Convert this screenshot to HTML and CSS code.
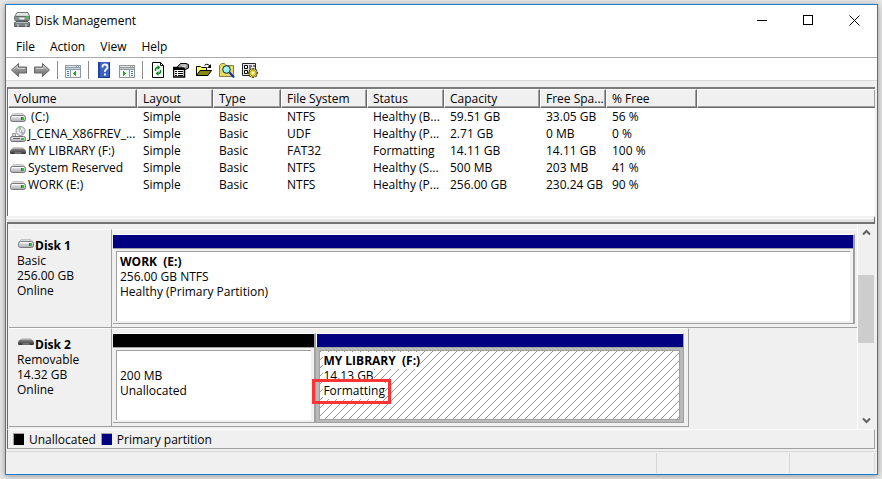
FILE: index.html
```html
<!DOCTYPE html>
<html lang="en">
<head>
    <meta charset="UTF-8">
    <meta name="viewport" content="width=device-width, initial-scale=1.0">
    <title>Disk Management</title>
    <link rel="stylesheet" href="styles.css">
</head>
<body>

    <!-- Shared drive icons -->
    <svg class="icon-defs" aria-hidden="true">
        <linearGradient id="metal" x1="0" y1="0" x2="0" y2="1">
            <stop offset="0" stop-color="#f4f4f6"/>
            <stop offset="1" stop-color="#a9a9b0"/>
        </linearGradient>
        <linearGradient id="rubber" x1="0" y1="0" x2="0" y2="1">
            <stop offset="0" stop-color="#8a8a8a"/>
            <stop offset="1" stop-color="#2e2e2e"/>
        </linearGradient>
        <linearGradient id="arrow" x1="0" y1="0" x2="0" y2="1">
            <stop offset="0" stop-color="#b8b8b8"/>
            <stop offset="1" stop-color="#6c6c6c"/>
        </linearGradient>
        <symbol id="drive" viewBox="0 0 16 16">
            <path d="M1 7.500 L3 4.500 H13 L15 7.500Z" fill="#dcdcdf" stroke="#c5c5c8"/>
            <rect x="0.500" y="6.500" width="15" height="6" rx="2" fill="url(#metal)" stroke="#77777c"/>
            <path d="M2 7.500h12" stroke="#fff"/>
            <rect x="12" y="8" width="2" height="3" fill="#2fc22f"/>
            <path d="M11.500 8v3" stroke="#1c7a1c"/>
        </symbol>
        <symbol id="removable" viewBox="0 0 16 16">
            <path d="M2 6 L4 4.500 H12 L14 6Z" fill="#dcdcdc" stroke="#cacaca"/>
            <path d="M0 9 Q0 6 3 5.500 H13 Q16 6 16 9 V10 Q16 11 14.500 11 H1.500 Q0 11 0 10Z" fill="url(#rubber)"/>
            <path d="M4 10.500 L5 9.500 H11 L12 10.500Z" fill="#a0a0a0"/>
        </symbol>
        <symbol id="disc" viewBox="0 0 16 16">
            <circle cx="10.500" cy="5" r="4.500" fill="#e6e9ea" stroke="#8f9396"/>
            <path d="M10.500 5 L8 1.500 A4 4 0 0 1 11 1Z" fill="#8cc49a"/>
            <path d="M10.500 5 L14 6.500 A4 4 0 0 1 12 9Z" fill="#9aa8d8"/>
            <circle cx="10.500" cy="5" r="1.200" fill="#fff" stroke="#999" stroke-width="0.600"/>
            <path d="M2.500 7.500h3v3h-3z" fill="#ddd" stroke="#999"/>
            <rect x="0.500" y="10.500" width="15" height="5" rx="2" fill="url(#metal)" stroke="#6d6d72"/>
            <path d="M3 12.500h7" stroke="#66666a"/>
            <rect x="11" y="12" width="3" height="2" fill="#2fc22f"/>
        </symbol>
    </svg>

    <div class="window">
        <header class="title-bar">
            <svg class="icon app-icon" viewBox="0 0 16 16" aria-hidden="true">
                <path d="M1 4 L3 0.500 H14 L15.500 4 V7 H1Z" fill="#d5d7d7" stroke="#747979"/>
                <path d="M3 2h10" stroke="#f4f4f4"/>
                <rect x="0.500" y="4.500" width="15" height="4" rx="1" fill="#8b9292" stroke="#646a6a"/>
                <path d="M5 5.500h6l-1 2H6z" fill="#eee"/>
                <rect x="12" y="4" width="2" height="2" fill="#35d335"/>
                <path d="M0.500 14.500 V11 L2 9.500 H14 L15.500 11 V14.500Z" fill="#7a8388" stroke="#535b60"/>
                <path d="M2 10.500h12" stroke="#b7bdc0"/>
                <path d="M4 12v3M12 12v3" stroke="#d8dcde"/>
            </svg>
            <h1 class="title">Disk Management</h1>
            <div class="window-buttons">
                <button type="button" aria-label="Minimize"><svg width="11" height="11" viewBox="0 0 11 11"><path d="M0 5.500h10"/></svg></button>
                <button type="button" aria-label="Maximize"><svg width="11" height="11" viewBox="0 0 11 11"><path d="M0.500 0.500h9v9h-9z"/></svg></button>
                <button type="button" aria-label="Close"><svg class="smooth" width="11" height="11" viewBox="0 0 11 11"><path d="M0.500 0.500l10 10M10.500 0.500l-10 10"/></svg></button>
            </div>
        </header>

        <nav class="menu-bar">
            <button type="button">File</button>
            <button type="button">Action</button>
            <button type="button">View</button>
            <button type="button">Help</button>
        </nav>

        <div class="toolbar" role="toolbar" aria-label="Tools">
            <button type="button" aria-label="Back">
                <svg class="icon" viewBox="0 0 16 16"><path d="M0.500 8 L7.500 1.500 V5 H15.500 V11 H7.500 V14.500Z" fill="url(#arrow)" stroke="#666"/><path d="M2.500 7.500 L6.500 4 V6.500 H14" fill="none" stroke="#ccc"/></svg>
            </button>
            <button type="button" aria-label="Forward">
                <svg class="icon" viewBox="0 0 16 16"><path d="M15.500 8 L8.500 1.500 V5 H0.500 V11 H8.500 V14.500Z" fill="url(#arrow)" stroke="#666"/><path d="M2 6.500 H9.500 V4 L13 7.500" fill="none" stroke="#ccc"/></svg>
            </button>
            <span class="separator"></span>
            <button type="button" aria-label="Show or hide console tree">
                <svg class="icon crisp" viewBox="0 0 16 16">
                    <path d="M0 3h16v13H0z" fill="#8e9aa5"/><path d="M1 4h10v1H1z" fill="#dfe7ee"/><path d="M12 4h1v1h-1zM14 4h1v1h-1z" fill="#fff"/>
                    <path d="M1 6h14v1H1z" fill="#c8d4df"/><path d="M1 8h4v7H1zM6 8h9v7H6z" fill="#f4f6f8"/>
                    <path d="M2 9h2v1H2zM2 11h2v1H2zM2 13h2v1H2z" fill="#3d78b8"/><path d="M11 9v5L8 11.500z" fill="#22a922"/>
                </svg>
            </button>
            <span class="separator"></span>
            <button type="button" aria-label="Help">
                <svg class="icon" viewBox="0 0 16 16">
                    <rect x="2" y="0" width="12" height="16" fill="#3c63c4"/><path d="M2 0h2v16H2z" fill="#25439a"/><path d="M13 0h1v16h-1zM4 15h10v1H4z" fill="#1f3782"/>
                    <path d="M6.500 5.500 V4.500 Q6.500 2.500 9 2.500 T11.500 5 Q11.500 6.500 10 7.500 T9 10" fill="none" stroke="#fff" stroke-width="1.800"/><rect x="8" y="11.500" width="2" height="2" fill="#fff"/>
                </svg>
            </button>
            <button type="button" aria-label="Show or hide action pane">
                <svg class="icon crisp" viewBox="0 0 16 16">
                    <path d="M0 3h16v13H0z" fill="#8e9696"/><path d="M1 4h10v1H1z" fill="#e5e9e9"/><path d="M12 4h1v1h-1zM14 4h1v1h-1z" fill="#fff"/>
                    <path d="M1 6h14v1H1z" fill="#c8d0d4"/><path d="M1 8h9v7H1zM11 8h4v7h-4z" fill="#f4f6f8"/>
                    <path d="M12 9h2v1h-2zM12 11h2v1h-2zM12 13h2v1h-2z" fill="#3d78b8"/><path d="M4 9v5l3-2.500z" fill="#22a922"/>
                </svg>
            </button>
            <span class="separator"></span>
            <button type="button" aria-label="Refresh">
                <svg class="icon" viewBox="0 0 16 16">
                    <path d="M2.500 0.500h8l3 3v12h-11z" fill="#fff" stroke="#000"/><path d="M10.500 0.500v3h3" fill="none" stroke="#000"/>
                    <path d="M5.500 9 V7.500 Q5.500 5.500 8 5.500" fill="none" stroke="#078a22" stroke-width="1.500"/><path d="M7.500 3v5l3-2.500z" fill="#078a22"/>
                    <path d="M10.500 8 V9.500 Q10.500 11.500 8 11.500" fill="none" stroke="#078a22" stroke-width="1.500"/><path d="M8.500 9v5l-3-2.500z" fill="#078a22"/>
                </svg>
            </button>
            <button type="button" aria-label="Properties">
                <svg class="icon" viewBox="0 0 16 16">
                    <path d="M0.500 5.500h11v9.500h-11z" fill="#fff" stroke="#000" stroke-width="1.500"/><path d="M1 6h10v2H1z" fill="#000"/>
                    <path d="M2 9.500h2M5 9.500h5M2 11.500h2M5 11.500h5M2 13.500h2M5 13.500h5" stroke="#000"/>
                    <path d="M4.500 4.500 L7.500 1.500 H13 L15.500 2.500 V6 L12.500 7.500 L10 5.500 L6.500 6Z" fill="#999" stroke="#000"/><path d="M8 3h5M9 5l4-1" stroke="#ddd"/>
                </svg>
            </button>
            <button type="button" aria-label="Open">
                <svg class="icon" viewBox="0 0 16 16">
                    <path d="M0.500 13.500 V4.500 H4.500 L5.500 5.500 H10.500 V8" fill="#ffff7a" stroke="#000"/><path d="M0.500 13.500 L4 8.500 H15.500 L12 13.500Z" fill="#868a12" stroke="#000"/>
                    <path d="M8.500 3.500 Q10 1.500 12 2.500 L14 4" fill="none" stroke="#000"/><path d="M15 2v4h-4z" fill="#000"/>
                </svg>
            </button>
            <button type="button" aria-label="Find">
                <svg class="icon" viewBox="0 0 16 16">
                    <path d="M0.500 14.500 V3.500 L2.500 1.500 H5.500 L7 3.500 H14.500 V14.500Z" fill="#ead95d" stroke="#84804a"/><path d="M2 5.500h11" stroke="#fffad0" stroke-dasharray="1 1"/>
                    <circle cx="7.500" cy="7.500" r="3.800" fill="#8df2fb" stroke="#223"/><path d="M6 7.500l2-2" stroke="#fff"/><path d="M10.500 10.500l4.500 5" stroke="#1028c8" stroke-width="2"/>
                </svg>
            </button>
            <button type="button" aria-label="Settings">
                <svg class="icon" viewBox="0 0 16 16">
                    <path d="M0.500 1.500h13v12h-13z" fill="#e8e8e8" stroke="#222"/><path d="M2.500 3.500h3v3h-3zM2.500 8.500h3v3h-3z" fill="#fff" stroke="#000"/><path d="M7 4h3M7 6h2M7 9h2M11 4h2" stroke="#000"/>
                    <path d="M11 6v10M6 11h10M7.500 7.500l7 7M14.500 7.500l-7 7" stroke="#332d00" stroke-width="2.400"/><path d="M11 6.500v9M6.500 11h9M8 8l6 6M14 8l-6 6" stroke="#efd63c" stroke-width="1.200"/>
                    <circle cx="11" cy="11" r="2.800" fill="#efd63c"/><circle cx="11" cy="11" r="1.200" fill="#fff"/>
                </svg>
            </button>
        </div>

        <main class="content">
            <div class="volume-list">
                <table>
                    <colgroup>
                        <col class="col-volume">
                        <col class="col-layout">
                        <col class="col-type">
                        <col class="col-fs">
                        <col class="col-status">
                        <col class="col-capacity">
                        <col class="col-free">
                        <col class="col-percent">
                        <col>
                    </colgroup>
                    <thead>
                        <tr><th>Volume</th><th>Layout</th><th>Type</th><th>File System</th><th>Status</th><th>Capacity</th><th>Free Spa...</th><th>% Free</th><th class="filler"></th></tr>
                    </thead>
                    <tbody>
                        <tr><td class="name"><svg class="icon"><use href="#drive"/></svg>&nbsp;(C:)</td><td>Simple</td><td>Basic</td><td>NTFS</td><td>Healthy (B...</td><td>59.51 GB</td><td>33.05 GB</td><td>56 %</td><td></td></tr>
                        <tr><td class="name"><svg class="icon"><use href="#disc"/></svg>J_CENA_X86FREV_...</td><td>Simple</td><td>Basic</td><td>UDF</td><td>Healthy (P...</td><td>2.71 GB</td><td>0 MB</td><td>0 %</td><td></td></tr>
                        <tr><td class="name"><svg class="icon"><use href="#removable"/></svg>MY LIBRARY (F:)</td><td>Simple</td><td>Basic</td><td>FAT32</td><td>Formatting</td><td>14.11 GB</td><td>14.11 GB</td><td>100 %</td><td></td></tr>
                        <tr><td class="name"><svg class="icon"><use href="#drive"/></svg>System Reserved</td><td>Simple</td><td>Basic</td><td>NTFS</td><td>Healthy (S...</td><td>500 MB</td><td>203 MB</td><td>41 %</td><td></td></tr>
                        <tr><td class="name"><svg class="icon"><use href="#drive"/></svg>WORK (E:)</td><td>Simple</td><td>Basic</td><td>NTFS</td><td>Healthy (P...</td><td>256.00 GB</td><td>230.24 GB</td><td>90 %</td><td></td></tr>
                    </tbody>
                </table>
            </div>
            <div class="splitter"></div>

            <div class="disk-view">
                <div class="disks">
                    <section class="disk">
                        <div class="disk-label">
                            <h2><svg class="icon"><use href="#drive"/></svg>Disk 1</h2>
                            <p>Basic</p>
                            <p>256.00 GB</p>
                            <p>Online</p>
                        </div>
                        <div class="partitions">
                            <div class="partition primary">
                                <div class="bar"></div>
                                <div class="details">
                                    <p><b>WORK &nbsp;(E:)</b></p>
                                    <p>256.00 GB NTFS</p>
                                    <p>Healthy (Primary Partition)</p>
                                </div>
                            </div>
                        </div>
                    </section>

                    <section class="disk">
                        <div class="disk-label">
                            <h2><svg class="icon"><use href="#removable"/></svg>Disk 2</h2>
                            <p>Removable</p>
                            <p>14.32 GB</p>
                            <p>Online</p>
                        </div>
                        <div class="partitions small">
                            <div class="partition unallocated">
                                <div class="bar"></div>
                                <div class="details">
                                    <p>&nbsp;</p>
                                    <p>200 MB</p>
                                    <p>Unallocated</p>
                                </div>
                            </div>
                            <div class="partition primary selected">
                                <div class="bar"></div>
                                <div class="details">
                                    <p><b>MY LIBRARY &nbsp;(F:)</b></p>
                                    <p><span>14.13 GB</span></p>
                                    <p class="marked"><span>Formatting</span></p>
                                </div>
                            </div>
                        </div>
                    </section>
                </div>

                <div class="scrollbar">
                    <button type="button" aria-label="Scroll up"><svg width="9" height="7" viewBox="0 0 9 7"><path d="M1 5.500L4.500 2L8 5.500"/></svg></button>
                    <div class="track"><div class="thumb"></div></div>
                    <button type="button" aria-label="Scroll down"><svg width="9" height="7" viewBox="0 0 9 7"><path d="M1 1.500L4.500 5L8 1.500"/></svg></button>
                </div>
            </div>

            <div class="legend">
                <span class="swatch black"></span><span>Unallocated</span>
                <span class="swatch navy"></span><span>Primary partition</span>
            </div>
        </main>

        <footer class="status-bar">
            <span></span>
            <span></span>
            <span></span>
        </footer>
    </div>

</body>
</html>
```
FILE: styles.css
```css
*,
*::after {
    box-sizing: border-box;
}

body {
    margin: 0;
    padding: 4px 4px 4px 5px;
    min-height: 100vh;
    display: flex;
    background-color: #e6e6e6;
    color: #000;
    font-family: "Open Sans", "Noto Sans", sans-serif;
    font-size: 12px;
    line-height: 15px;
}

h1, h2, p {
    margin: 0;
    font-size: 12px;
}

button {
    padding: 0;
    border: none;
    background: none;
    color: inherit;
    font: inherit;
}

.icon-defs {
    position: absolute;
    width: 0;
    height: 0;
}

.icon {
    display: block;
    flex: none;
    width: 16px;
    height: 16px;
}

.crisp {
    shape-rendering: crispEdges;
}

.window {
    flex: 1;
    min-width: 0;
    display: flex;
    flex-direction: column;
    border: 1px solid #1a7fd0;
    background-color: #fff;
    box-shadow: 0 1px 6px rgba(0, 0, 0, 0.35);
}

/* Title and menu */
.title-bar {
    display: flex;
    align-items: center;
    height: 30px;
    padding-left: 8px;
}

.title {
    flex: 1;
    margin-left: 5px;
    font-weight: normal;
}

.window-buttons {
    display: flex;
}

.window-buttons button {
    display: flex;
    align-items: center;
    justify-content: center;
    width: 46px;
    height: 28px;
}

.window-buttons path {
    fill: none;
    stroke: #000;
    shape-rendering: crispEdges;
}

.window-buttons .smooth path {
    shape-rendering: auto;
}

.menu-bar {
    display: flex;
    gap: 15px;
    height: 23px;
    padding: 0 10px;
    border-bottom: 1px solid #a9a9a9;
}

.toolbar {
    display: flex;
    align-items: center;
    height: 23px;
    padding: 1px 0 0 1px;
    border-bottom: 1px solid #d9d9d9;
}

.toolbar button {
    display: flex;
    justify-content: center;
    width: 23px;
}

.separator {
    width: 1px;
    height: 18px;
    margin: 0 3px 0 4px;
    background-color: #8c8c8c;
}

.content {
    flex: 1;
    display: flex;
    flex-direction: column;
    padding: 6px 2px 2px 1px;
    background-color: #f0f0f0;
}

/* Volume list */
.volume-list {
    flex: 1;
    border: 1px solid #696969;
    border-top: 2px solid #7c7c7c;
    border-right: none;
    border-bottom: none;
    background-color: #fff;
}

table {
    width: 100%;
    table-layout: fixed;
    border-collapse: separate;
    border-spacing: 0;
}

.col-volume { width: 129px; }
.col-layout { width: 76px; }
.col-type { width: 68px; }
.col-fs { width: 86px; }
.col-status { width: 77px; }
.col-capacity { width: 96px; }
.col-free { width: 66px; }
.col-percent { width: 91px; }

th, td {
    padding: 0 0 0 6px;
    text-align: left;
    font-weight: normal;
    white-space: nowrap;
}

th {
    height: 19px;
    padding-left: 5px;
    border-top: 1px solid #fff;
    border-left: 1px solid #fff;
    border-right: 1px solid #696969;
    border-bottom: 1px solid #696969;
    background-color: #f0f0f0;
    box-shadow: inset -1px -1px #a0a0a0;
}

th.filler {
    border-right: none;
}

td {
    height: 17px;
}

td.name {
    display: flex;
    align-items: center;
    gap: 2px;
    padding-left: 2px;
}

.splitter {
    height: 8px;
    border-top: 2px solid #f0f0f0;
    border-bottom: 2px solid #737373;
    border-right: 1px solid #696969;
    background-color: #e3e3e3;
    box-shadow: inset 0 1px #fff;
}

/* Graphical view */
.disk-view {
    display: flex;
    margin-right: 1px;
    padding-left: 1px;
    border-left: 1px solid #696969;
}

.disks {
    flex: 1;
    padding: 5px 0 2px;
}

.disk {
    display: flex;
    height: 99px;
    border-bottom: 1px solid #a0a0a0;
}

.disk:last-child {
    border-bottom: none;
}

.disk-label {
    width: 103px;
    padding: 8px 0 0 8px;
    border-top: 1px solid #fff;
    border-right: 1px solid #a0a0a0;
}

.disk:last-child .disk-label {
    border-bottom: 1px solid #a0a0a0;
}

.disk-label h2 {
    display: flex;
    height: 15px;
}

.disk-label h2 .icon {
    margin: -3px 1px 0 1px;
}

.partitions {
    flex: 1;
    display: flex;
    padding: 4px 2px 3px 1px;
    border-top: 1px solid #fff;
}

.partitions.small {
    flex: 0 0 68%;
    padding-right: 4px;
    border-right: 1px solid #a0a0a0;
    border-bottom: 1px solid #a0a0a0;
}

.partition {
    flex: 20 1 0;
    display: flex;
    flex-direction: column;
    border-top: 1px solid #fff;
    border-right: 2px solid #a0a0a0;
    border-bottom: 1px solid #a0a0a0;
}

.partition.unallocated {
    flex-grow: 11;
}

.partition.selected {
    border-right-width: 1px;
    background-color: #b9b9b9;
}

.bar {
    height: 14px;
    border-bottom: 1px solid #a0a0a0;
}

.primary .bar {
    background-color: #000080;
}

.unallocated .bar {
    background-color: #000;
}

.details {
    flex: 1;
    margin: 2px 3px;
    padding: 2px 3px;
    border-top: 1px solid #a0a0a0;
    border-left: 1px solid #a0a0a0;
    background-color: #fff;
}

.selected .bar {
    border-left: 1px solid #fff;
}

.selected .details {
    border: 1px solid #a0a0a0;
    background-image: url("data:image/svg+xml,%3Csvg xmlns='http://www.w3.org/2000/svg' width='8' height='8'%3E%3Cpath fill='%23999' d='M0 0h1v1H0zM7 1h1v1H7zM6 2h1v1H6zM5 3h1v1H5zM4 4h1v1H4zM3 5h1v1H3zM2 6h1v1H2zM1 7h1v1H1z'/%3E%3C/svg%3E");
}

.selected b,
.selected span {
    background-color: #fff;
}

.marked {
    position: relative;
}

/* Red frame lying over the volume's status */
.marked::after {
    content: "";
    position: absolute;
    top: -4px;
    left: -11px;
    width: 79px;
    height: 25px;
    border: 3px solid #fb3434;
}

.scrollbar {
    display: flex;
    flex-direction: column;
    width: 17px;
    border-left: 1px solid #fff;
}

.scrollbar button {
    display: flex;
    align-items: center;
    justify-content: center;
    height: 17px;
}

.scrollbar path {
    fill: none;
    stroke: #606060;
    stroke-width: 2;
}

.track {
    flex: 1;
    padding-top: 34px;
}

.thumb {
    height: 68px;
    background-color: #cdcdcd;
}

.legend {
    display: flex;
    align-items: center;
    gap: 5px;
    height: 20px;
    padding-left: 5px;
    border-top: 1px solid #fff;
    border-left: 1px solid #696969;
    border-right: 1px solid #a0a0a0;
    border-bottom: 1px solid #a0a0a0;
}

.swatch {
    width: 11px;
    height: 12px;
    border-top: 1px solid #a0a0a0;
    border-left: 1px solid #a0a0a0;
}

.black {
    background-color: #000;
}

.navy {
    background-color: #000080;
}

.status-bar {
    display: flex;
    justify-content: flex-end;
    height: 23px;
    padding: 1px 2px 1px 0;
    border-top: 1px solid #d7d7d7;
    background-color: #f0f0f0;
}

.status-bar span {
    width: 133px;
    border-right: 1px solid #d7d7d7;
}

.status-bar span:first-child {
    flex: 1;
}

.status-bar span:last-child {
    width: 85px;
}
```
